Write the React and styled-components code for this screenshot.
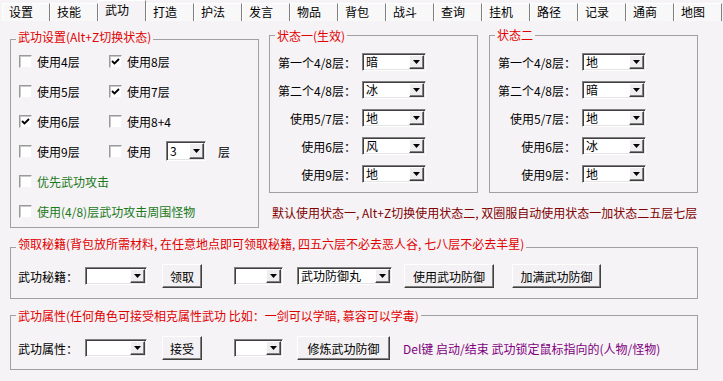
import React from 'react';
import styled, { createGlobalStyle } from 'styled-components';

const GlobalStyle = createGlobalStyle`
  html, body {
    margin: 0;
    padding: 0;
    background: #f6f3f6;
  }
  body {
    font-family: "Noto Sans CJK SC", "Liberation Sans", sans-serif;
    font-size: 12px;
    color: #000;
  }
`;

const Window = styled.div`
  width: 723px;
  height: 381px;
  overflow: hidden;
  background: #f6f3f6;
`;

const TabBar = styled.div`
  display: flex;
  align-items: flex-end;
  height: 21px;
  padding-left: 2px;
`;

const Tab = styled.div`
  box-sizing: border-box;
  width: 48px;
  height: ${p => (p.$active ? 21 : 18)}px;
  padding: ${p => (p.$active ? '1px 0 0 6px' : '0 0 0 6px')};
  line-height: 16px;
  white-space: nowrap;
  border-top: 1px solid #fff;
  border-left: 1px solid #fff;
  border-right: 1px solid #808080;
  background: ${p => (p.$active ? '#f6f3f6' : '#f9f8f9')};
`;

const Content = styled.div`
  padding-left: 10px;
`;

const TopRow = styled.div`
  display: flex;
  align-items: flex-start;
`;

const RightCol = styled.div`
  margin: 14px 0 0 10px;
`;

const GroupRow = styled.div`
  display: flex;
  gap: 11px;
`;

const Group = styled.div`
  position: relative;
  box-sizing: border-box;
  width: ${p => p.$w}px;
  height: ${p => p.$h}px;
  margin-top: ${p => p.$mt || 0}px;
  border: 1px solid #a0a0a0;
`;

const Legend = styled.span`
  position: absolute;
  top: ${p => p.$top}px;
  left: 5px;
  padding: 0 2px;
  line-height: 14px;
  white-space: nowrap;
  color: #e00000;
  background: #f6f3f6;
`;

const CheckGrid = styled.div`
  display: grid;
  grid-template-columns: 90px auto;
  grid-auto-rows: 30px;
  align-items: center;
  padding: 6px 0 0 8px;
`;

const CheckItem = styled.div`
  display: flex;
  align-items: center;
  gap: 5px;
  white-space: nowrap;
  color: ${p => p.$color || '#000'};
  grid-column: ${p => (p.$wide ? '1 / -1' : 'auto')};
`;

const Box = styled.span`
  box-sizing: border-box;
  width: 13px;
  height: 13px;
  display: inline-flex;
  align-items: center;
  justify-content: center;
  background: #fff;
  border: 1px solid;
  border-color: #9a9a9a #f4f4f4 #f4f4f4 #9a9a9a;
  box-shadow: inset 1px 1px #c8c8c8;
`;

const StateGrid = styled.div`
  display: grid;
  grid-template-columns: 78px 64px;
  column-gap: 6px;
  grid-auto-rows: 28px;
  align-items: center;
  padding: 12px 0 0 8px;
`;

const FieldLabel = styled.span`
  text-align: right;
  white-space: nowrap;
`;

const ComboBox = styled.div`
  box-sizing: border-box;
  display: flex;
  width: ${p => p.$w}px;
  height: ${p => p.$h || 18}px;
  margin-left: ${p => p.$ml || 0}px;
  background: #fff;
  border: 1px solid;
  border-color: #808080 #fff #fff #808080;
  box-shadow: inset 1px 1px #404040, inset -1px -1px #e4e4e4;
`;

const ComboValue = styled.span`
  flex: 1;
  padding-left: 3px;
  line-height: ${p => (p.$h || 18) - 2}px;
  white-space: nowrap;
  overflow: hidden;
`;

const ComboArrow = styled.span`
  box-sizing: border-box;
  width: 15px;
  margin: 1px 1px 1px 0;
  display: flex;
  align-items: center;
  justify-content: center;
  background: #efedef;
  border: 1px solid;
  border-color: #fff #404040 #404040 #fff;
  box-shadow: inset -1px -1px #808080;
`;

const Notice = styled.div`
  margin: 13px 0 0 3px;
  line-height: 14px;
  white-space: nowrap;
  color: #800000;
`;

const ActionRow = styled.div`
  display: flex;
  align-items: center;
  height: 24px;
  padding: ${p => p.$pt}px 0 0 7px;
`;

const RowLabel = styled.span`
  width: 67px;
  white-space: nowrap;
`;

const Button = styled.button`
  box-sizing: border-box;
  width: ${p => p.$w}px;
  height: 24px;
  margin-left: ${p => p.$ml || 0}px;
  padding: 0;
  font: inherit;
  color: #000;
  background: #f3f1f3;
  border: 1px solid;
  border-color: #fff #404040 #404040 #fff;
  box-shadow: inset -1px -1px #808080;
  white-space: nowrap;
`;

const Hint = styled.span`
  margin-left: ${p => p.$ml || 0}px;
  white-space: nowrap;
  color: #800080;
`;

function Check({ checked }) {
  return (
    <Box>
      {checked && (
        <svg width="9" height="9" viewBox="0 0 9 9">
          <path d="M1 4 L3.5 6.5 L8 2" fill="none" stroke="#000" strokeWidth="1.8" />
        </svg>
      )}
    </Box>
  );
}

function Combo({ w, h, ml, value }) {
  return (
    <ComboBox $w={w} $h={h} $ml={ml}>
      <ComboValue $h={h}>{value}</ComboValue>
      <ComboArrow>
        <svg width="7" height="4" viewBox="0 0 7 4">
          <polygon points="0,0 7,0 3.5,4" fill="#000" />
        </svg>
      </ComboArrow>
    </ComboBox>
  );
}

const tabs = ['设置', '技能', '武功', '打造', '护法', '发言', '物品', '背包', '战斗', '查询', '挂机', '路径', '记录', '通商', '地图'];

const stateOne = [
  ['第一个4/8层：', '暗'],
  ['第二个4/8层：', '冰'],
  ['使用5/7层：', '地'],
  ['使用6层：', '风'],
  ['使用9层：', '地'],
];

const stateTwo = [
  ['第一个4/8层：', '地'],
  ['第二个4/8层：', '暗'],
  ['使用5/7层：', '地'],
  ['使用6层：', '冰'],
  ['使用9层：', '地'],
];

function StateGroup({ title, rows, legendTop }) {
  return (
    <Group $w={209} $h={158}>
      <Legend $top={legendTop}>{title}</Legend>
      <StateGrid>
        {rows.map(([label, value]) => (
          <React.Fragment key={label}>
            <FieldLabel>{label}</FieldLabel>
            <Combo w={64} value={value} />
          </React.Fragment>
        ))}
      </StateGrid>
    </Group>
  );
}

export default function App() {
  return (
    <Window>
      <GlobalStyle />
      <TabBar>
        {tabs.map(t => (
          <Tab key={t} $active={t === '武功'}>{t}</Tab>
        ))}
      </TabBar>
      <Content>
        <TopRow>
          <Group $w={249} $h={189} $mt={18}>
            <Legend $top={-10}>武功设置(Alt+Z切换状态)</Legend>
            <CheckGrid>
              <CheckItem><Check />使用4层</CheckItem>
              <CheckItem><Check checked />使用8层</CheckItem>
              <CheckItem><Check />使用5层</CheckItem>
              <CheckItem><Check checked />使用7层</CheckItem>
              <CheckItem><Check checked />使用6层</CheckItem>
              <CheckItem><Check />使用8+4</CheckItem>
              <CheckItem><Check />使用9层</CheckItem>
              <CheckItem>
                <Check />使用
                <Combo w={40} h={20} ml={10} value="3" />
                <span style={{ marginLeft: 7 }}>层</span>
              </CheckItem>
              <CheckItem $wide $color="#1a7a1a"><Check />优先武功攻击</CheckItem>
              <CheckItem $wide $color="#1a7a1a"><Check />使用(4/8)层武功攻击周围怪物</CheckItem>
            </CheckGrid>
          </Group>
          <RightCol>
            <GroupRow>
              <StateGroup title="状态一(生效)" rows={stateOne} legendTop={-7} />
              <StateGroup title="状态二" rows={stateTwo} legendTop={-8} />
            </GroupRow>
            <Notice>默认使用状态一, Alt+Z切换使用状态二, 双圈服自动使用状态一加状态二五层七层</Notice>
          </RightCol>
        </TopRow>

        <Group $w={688} $h={52} $mt={19}>
          <Legend $top={-11}>领取秘籍(背包放所需材料, 在任意地点即可领取秘籍, 四五六层不必去恶人谷, 七八层不必去羊星)</Legend>
          <ActionRow $pt={16}>
            <RowLabel>武功秘籍：</RowLabel>
            <Combo w={62} value="" />
            <Button $w={40} $ml={15}>领取</Button>
            <Combo w={49} ml={32} value="" />
            <Combo w={95} ml={14} value="武功防御丸" />
            <Button $w={90} $ml={12}>使用武功防御</Button>
            <Button $w={89} $ml={18}>加满武功防御</Button>
          </ActionRow>
        </Group>

        <Group $w={688} $h={55} $mt={16}>
          <Legend $top={-7}>武功属性(任何角色可接受相克属性武功 比如：一剑可以学暗, 慕容可以学毒)</Legend>
          <ActionRow $pt={20}>
            <RowLabel>武功属性：</RowLabel>
            <Combo w={62} value="" />
            <Button $w={40} $ml={15}>接受</Button>
            <Combo w={49} ml={32} value="" />
            <Button $w={93} $ml={14}>修炼武功防御</Button>
            <Hint $ml={13}>Del键 启动/结束 武功锁定鼠标指向的(人物/怪物)</Hint>
          </ActionRow>
        </Group>
      </Content>
    </Window>
  );
}
